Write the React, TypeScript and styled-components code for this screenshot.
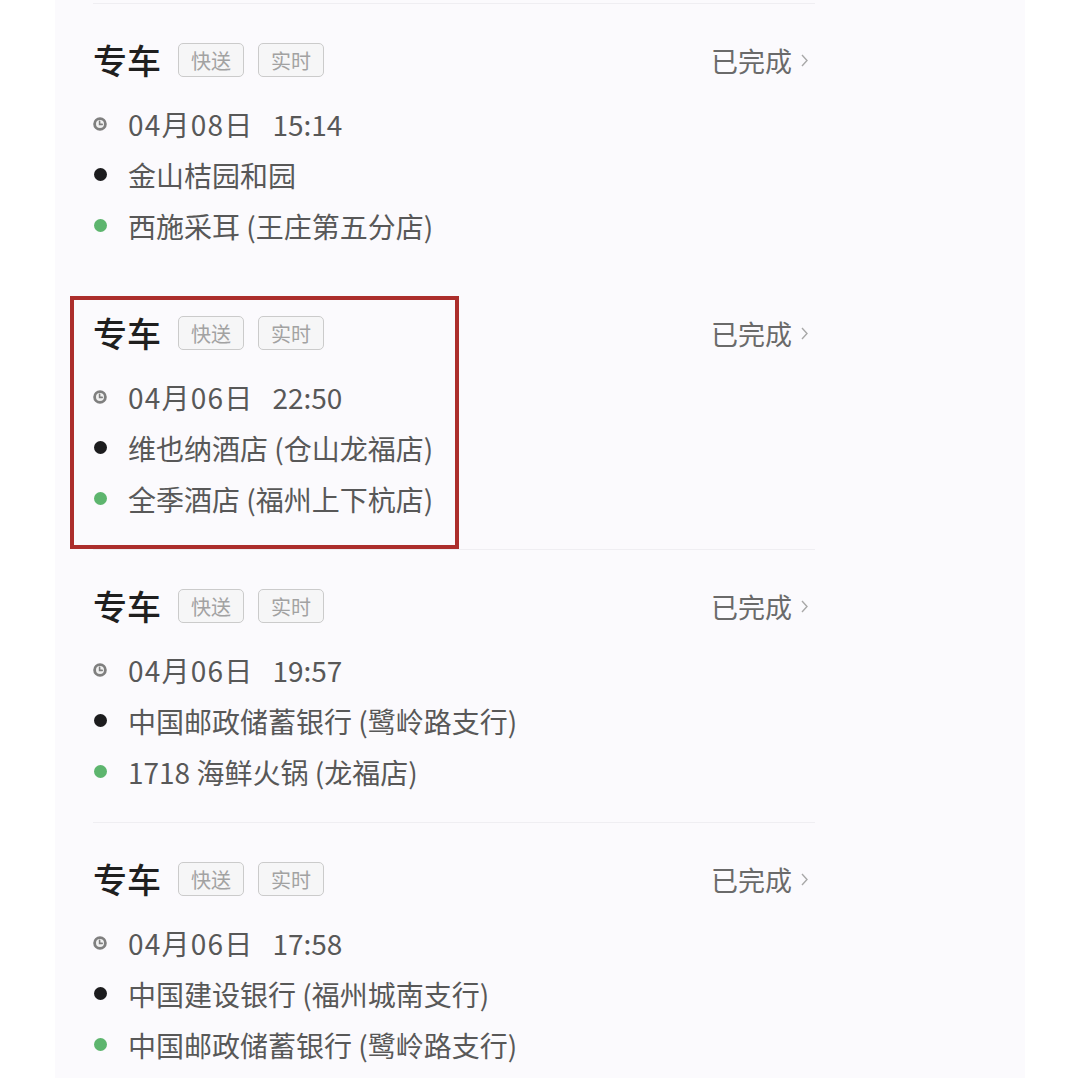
import React from 'react'
import styled, { createGlobalStyle } from 'styled-components'

const GlobalStyle = createGlobalStyle`
  html, body {
    margin: 0;
    padding: 0;
    background: #ffffff;
    overflow: hidden;
  }
  body {
    font-family: 'Noto Sans CJK SC', 'Noto Sans', sans-serif;
  }
`

type Order = {
  day: string
  time: string
  from: string
  to: string
  highlight?: boolean
  divider?: boolean
}

const orders: Order[] = [
  { day: '04月08日', time: '15:14', from: '金山桔园和园', to: '西施采耳 (王庄第五分店)', divider: true },
  { day: '04月06日', time: '22:50', from: '维也纳酒店 (仓山龙福店)', to: '全季酒店 (福州上下杭店)', highlight: true },
  { day: '04月06日', time: '19:57', from: '中国邮政储蓄银行 (鹭岭路支行)', to: '1718 海鲜火锅 (龙福店)', divider: true },
  { day: '04月06日', time: '17:58', from: '中国建设银行 (福州城南支行)', to: '中国邮政储蓄银行 (鹭岭路支行)', divider: true },
]

const ClockIcon = () => (
  <svg width='14' height='14' viewBox='0 0 14 14'>
    <circle cx='7' cy='7' r='5.4' fill='#f0f0f0' stroke='#7f7f7f' strokeWidth='2.8' />
    <path d='M6.6 4.4 V7.4 H9.2' fill='none' stroke='#7f7f7f' strokeWidth='1.6' strokeLinecap='round' />
  </svg>
)

const Chevron = () => (
  <svg width='9' height='15' viewBox='0 0 9 15'>
    <polyline points='2,2 7,7.5 2,13' fill='none' stroke='#a8a8a8' strokeWidth='1.4' />
  </svg>
)

const OrderList: React.FC = () => {
  return (
    <Panel>
      <List>
        {orders.map((o, i) => (
          <Item key={i} divider={!!o.divider}>
            {o.highlight && <Highlight />}
            <TitleRow>
              <TitleGroup>
                <Title>专车</Title>
                <Tag>快送</Tag>
                <Tag>实时</Tag>
              </TitleGroup>
              <Status>
                已完成
                <Chevron />
              </Status>
            </TitleRow>
            <Rows>
              <Row>
                <Marker>
                  <ClockIcon />
                </Marker>
                <DateText>
                  <Day>{o.day}</Day>
                  <span>{o.time}</span>
                </DateText>
              </Row>
              <Row>
                <Marker>
                  <Dot color='#1c1c1e' />
                </Marker>
                <Place>{o.from}</Place>
              </Row>
              <Row>
                <Marker>
                  <Dot color='#5db56e' />
                </Marker>
                <Place>{o.to}</Place>
              </Row>
            </Rows>
          </Item>
        ))}
      </List>
    </Panel>
  )
}

const App: React.FC = () => (
  <>
    <GlobalStyle />
    <OrderList />
  </>
)

const Panel = styled.div`
  margin-left: 55px;
  width: 970px;
  min-height: 100vh;
  box-sizing: border-box;
  background: #fbfafd;
  padding: 3px 0 0 38px;
`

const List = styled.div`
  width: 722px;
  display: flex;
  flex-direction: column;
`

const Item = styled.div<{ divider: boolean }>`
  position: relative;
  border-top: 1px solid ${(p) => (p.divider ? '#efeef2' : 'transparent')};
  padding: 30px 0 25px;
`

const Highlight = styled.div`
  position: absolute;
  left: -23px;
  top: 19px;
  width: 389px;
  height: 253px;
  box-sizing: border-box;
  border: 4px solid #ac2e2c;
  pointer-events: none;
`

const TitleRow = styled.div`
  height: 52px;
  display: flex;
  align-items: center;
  justify-content: space-between;
`

const TitleGroup = styled.div`
  display: flex;
  align-items: center;
  gap: 14px;
`

const Title = styled.span`
  font-size: 34px;
  font-weight: 500;
  color: #1f1f1f;
  margin-right: 3px;
  line-height: 1;
`

const Tag = styled.span`
  width: 66px;
  height: 34px;
  box-sizing: border-box;
  display: flex;
  align-items: center;
  justify-content: center;
  border: 1.5px solid #cbcbcb;
  border-radius: 5px;
  background: #f6f6f7;
  font-size: 20px;
  color: #a2a2a2;
`

const Status = styled.span`
  display: flex;
  align-items: center;
  gap: 8px;
  font-size: 27px;
  color: #6a6a6a;
  margin-right: 6px;
`

const Rows = styled.div`
  margin-top: 12px;
  display: flex;
  flex-direction: column;
`

const Row = styled.div`
  height: 51px;
  display: flex;
  align-items: center;
  gap: 21px;
`

const Marker = styled.span`
  width: 14px;
  display: flex;
  align-items: center;
  justify-content: center;
`

const Dot = styled.span<{ color: string }>`
  width: 13px;
  height: 13px;
  border-radius: 50%;
  background: ${(p) => p.color};
`

const DateText = styled.span`
  display: flex;
  align-items: baseline;
  gap: 19px;
  font-size: 28px;
  color: #585858;
`

const Day = styled.span`
  letter-spacing: 1.2px;
`

const Place = styled.span`
  font-size: 28px;
  color: #585858;
  white-space: pre;
`

export default App
